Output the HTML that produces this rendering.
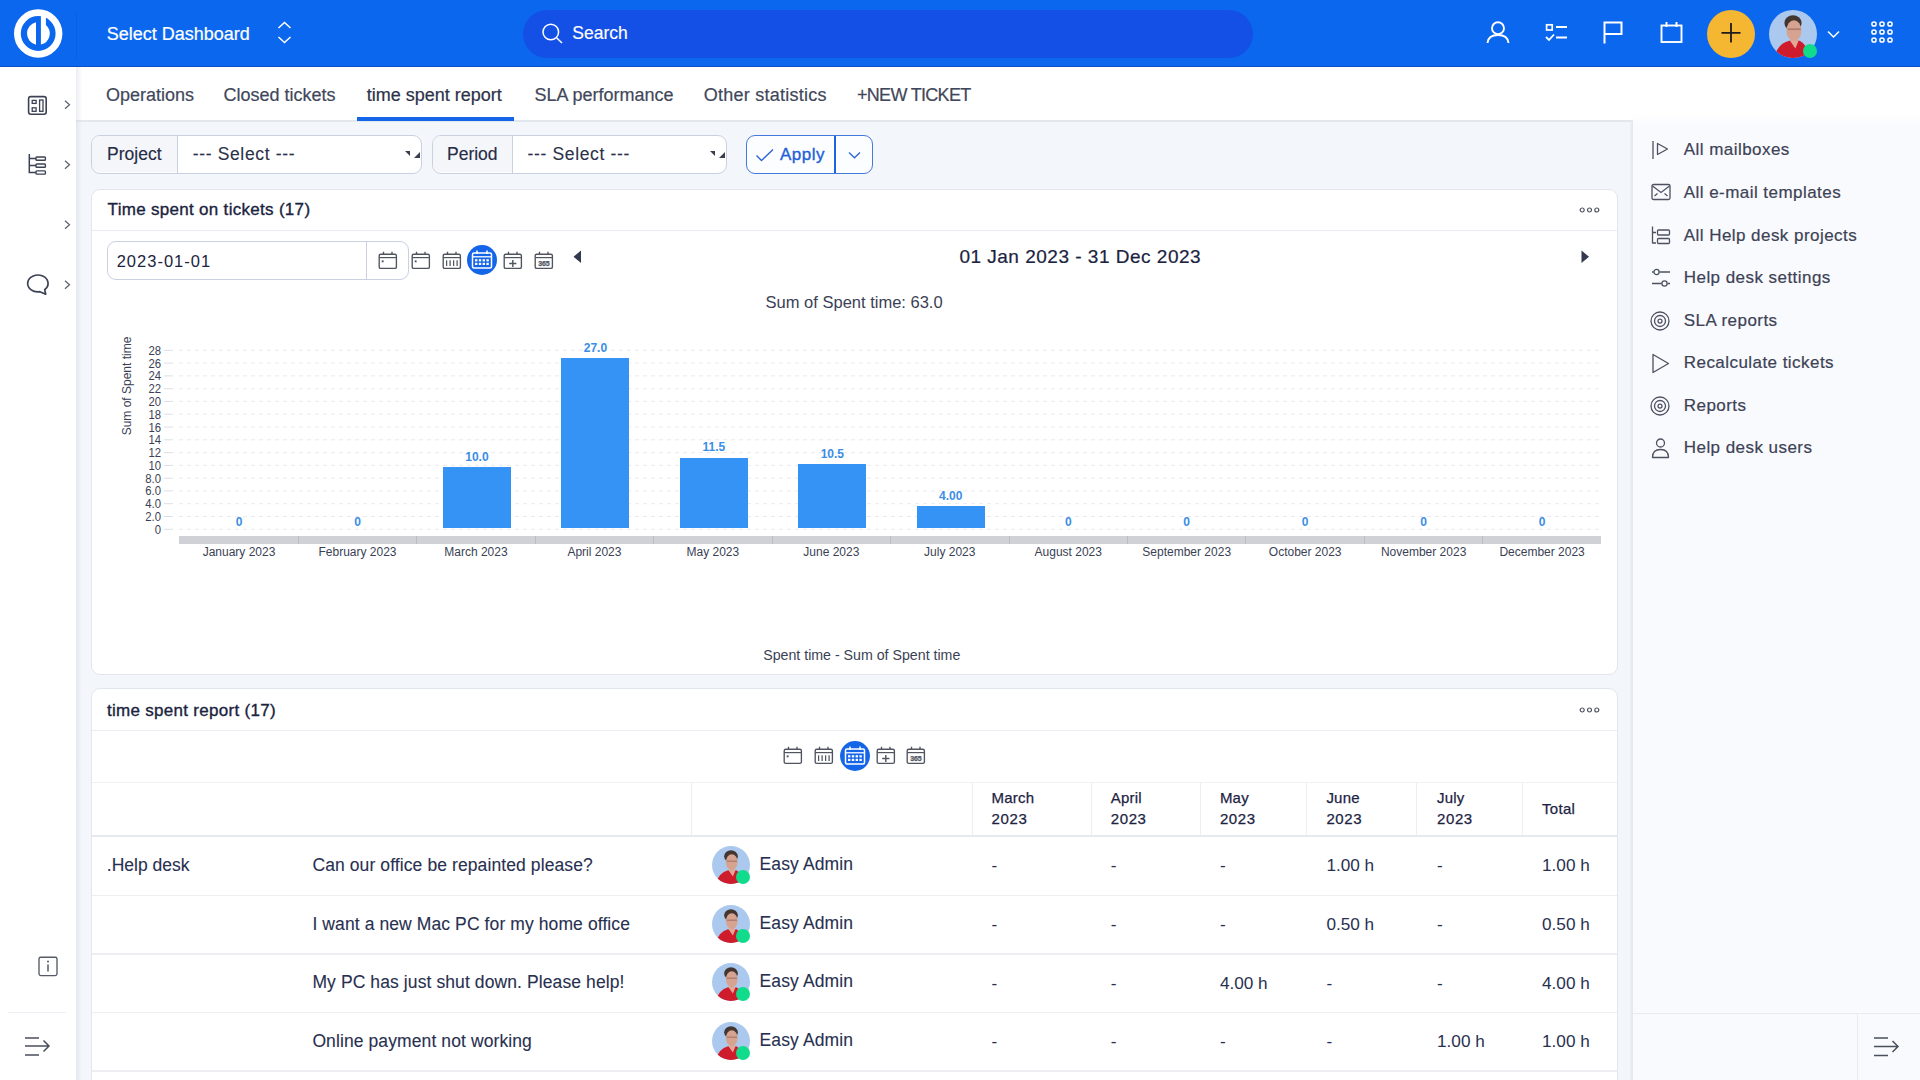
<!DOCTYPE html><html><head><meta charset="utf-8"><title>time spent report</title><style>
html,body{margin:0;padding:0;width:1920px;height:1080px;overflow:hidden;background:#f3f6fb;font-family:"Liberation Sans",sans-serif;}
.t{position:absolute;white-space:nowrap;}
.r{position:absolute;box-sizing:border-box;}
svg.r{overflow:visible}
</style></head><body>

<div class="r" style="left:0px;top:0px;width:1920px;height:67px;background:#0c67ef;"></div>
<div class="r" style="left:0px;top:65.5px;width:1920px;height:1.5px;background:#0a50c4;"></div>
<div class="r" style="left:0px;top:67px;width:76px;height:1013px;background:#ffffff;"></div>
<div class="r" style="left:76px;top:67px;width:1557px;height:54px;background:#ffffff;"></div>
<div class="r" style="left:76px;top:120px;width:1557px;height:2px;background:#e3e7ee;"></div>
<div class="r" style="left:1633px;top:67px;width:287px;height:1013px;background:linear-gradient(180deg,#ffffff 0px,#ffffff 46px,#f9fafd 60px,#f9fafd 100%);"></div>
<div class="r" style="left:1630px;top:121px;width:3px;height:959px;background:linear-gradient(90deg,#eef1f6,#e2e6ed);"></div>
<div class="r" style="left:76px;top:67px;width:6px;height:1013px;background:linear-gradient(90deg,rgba(205,210,220,0.4),rgba(230,234,240,0));"></div>
<svg class="r" style="left:14px;top:9px;" width="49" height="49" viewBox="0 0 49 49"><circle cx="24.2" cy="24.5" r="20.8" fill="none" stroke="#fff" stroke-width="6.8"/><path d="M22 13.36 A11.4 11.4 0 0 0 22 35.64 Z" fill="#fff"/><path d="M26.9 6.5 L31.9 6.5 L31.9 15.92 A11.4 11.4 0 0 1 26.9 35.62 Z" fill="#fff"/></svg>
<div class="r" style="left:76px;top:12px;width:1px;height:46px;background:#0b5fe0;"></div>
<div class="t " style="left:106.75px;top:24.76px;font-size:18px;line-height:18px;color:#ffffff;-webkit-text-stroke:0.2px #ffffff;">Select Dashboard</div>
<svg class="r" style="left:277px;top:21px;" width="16" height="23" viewBox="0 0 16 23"><path d="M1.5 7 L7.5 1.5 L13.5 7 M1.5 16 L7.5 21.5 L13.5 16" fill="none" stroke="#fff" stroke-width="1.5"/></svg>
<div class="r" style="left:523px;top:9.5px;width:730px;height:48px;background:#1450e6;border-radius:24px;"></div>
<svg class="r" style="left:542px;top:23px;" width="22" height="22" viewBox="0 0 22 22"><circle cx="8.8" cy="9" r="7.8" fill="none" stroke="#fff" stroke-width="1.5"/><path d="M14.5 14.8 L20 20" stroke="#fff" stroke-width="1.5"/></svg>
<div class="t " style="left:572.30px;top:25.49px;font-size:17.5px;line-height:17.5px;color:#ffffff;-webkit-text-stroke:0.15px #ffffff;">Search</div>
<svg class="r" style="left:1486px;top:20px;" width="25" height="25" viewBox="0 0 25 25"><circle cx="12" cy="8.2" r="6" fill="none" stroke="#fff" stroke-width="1.9"/><path d="M1.5 23 C2 17.5 6.5 15 12 15 C17.5 15 22 17.5 22.5 23" fill="none" stroke="#fff" stroke-width="1.9"/></svg>
<svg class="r" style="left:1545px;top:23px;" width="23" height="19" viewBox="0 0 23 19"><rect x="1.6" y="1.8" width="5.6" height="5.2" fill="none" stroke="#fff" stroke-width="1.7"/><path d="M11 4 H22 M11 14.5 H22 M1 14 L4 17 L9 11.5" fill="none" stroke="#fff" stroke-width="1.8"/></svg>
<svg class="r" style="left:1603px;top:21px;" width="21" height="23" viewBox="0 0 21 23"><path d="M1.5 22.5 V1.5 H18.5 V13 H1.5" fill="none" stroke="#fff" stroke-width="2"/></svg>
<svg class="r" style="left:1660px;top:21px;" width="24" height="23" viewBox="0 0 24 23"><rect x="1.5" y="4.5" width="20" height="16.5" fill="none" stroke="#fff" stroke-width="1.9"/><path d="M6.5 1 V6 M16.5 1 V6" stroke="#fff" stroke-width="1.9"/></svg>
<svg class="r" style="left:1707px;top:9.5px;" width="48" height="48" viewBox="0 0 48 48"><circle cx="24" cy="24" r="24" fill="#f5b731"/><path d="M24 13 V32.5 M14.5 22.8 H33.5" stroke="#1d1d1d" stroke-width="1.8"/></svg>
<svg class="r" style="left:1769px;top:9.5px;" width="48" height="48" viewBox="0 0 48 48"><defs><clipPath id="c1793_33"><circle cx="24" cy="24" r="24"/></clipPath></defs><g clip-path="url(#c1793_33)"><rect width="48" height="48" fill="#abc9ee"/><ellipse cx="24.0" cy="12.96" rx="8.64" ry="7.68" fill="#43352f"/><ellipse cx="24.96" cy="20.64" rx="7.4399999999999995" ry="10.32" fill="#d6a390"/><path d="M18.72 19.200000000000003 H31.68" stroke="#8a625a" stroke-width="1.6800000000000002" opacity="0.6"/><path d="M4.800000000000001 48 Q8.64 33.599999999999994 20.16 30.72 L30.72 30.72 Q38.400000000000006 34.56 41.28 48 Z" fill="#cf1c2c"/><path d="M20.64 30.240000000000002 L29.759999999999998 30.240000000000002 L26.400000000000002 38.400000000000006 Z" fill="#e2a995"/></g><circle cx="41" cy="41" r="7" fill="#11dc8c"/></svg>
<svg class="r" style="left:1827px;top:30px;" width="14" height="9" viewBox="0 0 14 9"><path d="M1 1.5 L6.5 7 L12 1.5" fill="none" stroke="#fff" stroke-width="1.5"/></svg>
<svg class="r" style="left:1870.5px;top:21.3px;" width="23" height="23" viewBox="0 0 23 23"><circle cx="3" cy="3" r="2.1" fill="none" stroke="#fff" stroke-width="1.5"/><circle cx="11" cy="3" r="2.1" fill="none" stroke="#fff" stroke-width="1.5"/><circle cx="19" cy="3" r="2.1" fill="none" stroke="#fff" stroke-width="1.5"/><circle cx="3" cy="11" r="2.1" fill="none" stroke="#fff" stroke-width="1.5"/><circle cx="11" cy="11" r="2.1" fill="none" stroke="#fff" stroke-width="1.5"/><circle cx="19" cy="11" r="2.1" fill="none" stroke="#fff" stroke-width="1.5"/><circle cx="3" cy="19" r="2.1" fill="none" stroke="#fff" stroke-width="1.5"/><circle cx="11" cy="19" r="2.1" fill="none" stroke="#fff" stroke-width="1.5"/><circle cx="19" cy="19" r="2.1" fill="none" stroke="#fff" stroke-width="1.5"/></svg>
<svg class="r" style="left:27px;top:95px;" width="21" height="21" viewBox="0 0 21 21"><rect x="1.6" y="1.6" width="17.6" height="17.6" rx="2.2" fill="none" stroke="#3c4254" stroke-width="1.6"/><rect x="5.2" y="5.4" width="3.9" height="3" fill="none" stroke="#3c4254" stroke-width="1.3"/><rect x="5.2" y="12.8" width="3.9" height="3.5" fill="none" stroke="#3c4254" stroke-width="1.3"/><rect x="12.6" y="5" width="3.4" height="11.3" fill="none" stroke="#3c4254" stroke-width="1.3"/></svg>
<svg class="r" style="left:27px;top:154px;" width="22" height="23" viewBox="0 0 22 23"><path d="M2.3 0 V18.5 H9 M2.3 4.6 H9 M2.3 11.6 H9" fill="none" stroke="#3c4254" stroke-width="1.5"/><rect x="9" y="3" width="9.4" height="3.2" rx="0.8" fill="none" stroke="#3c4254" stroke-width="1.4"/><rect x="9" y="10" width="9.4" height="3.2" rx="0.8" fill="none" stroke="#3c4254" stroke-width="1.4"/><rect x="9" y="16.9" width="9.4" height="3.2" rx="0.8" fill="none" stroke="#3c4254" stroke-width="1.4"/></svg>
<svg class="r" style="left:64px;top:100px;top:100px" width="8" height="10" viewBox="0 0 8 10"><path d="M1 0.8 L5.5 4.8 L1 8.8" fill="none" stroke="#5d6270" stroke-width="1.25"/></svg>
<svg class="r" style="left:64px;top:100px;top:160px" width="8" height="10" viewBox="0 0 8 10"><path d="M1 0.8 L5.5 4.8 L1 8.8" fill="none" stroke="#5d6270" stroke-width="1.25"/></svg>
<svg class="r" style="left:64px;top:100px;top:220px" width="8" height="10" viewBox="0 0 8 10"><path d="M1 0.8 L5.5 4.8 L1 8.8" fill="none" stroke="#5d6270" stroke-width="1.25"/></svg>
<svg class="r" style="left:64px;top:100px;top:280px" width="8" height="10" viewBox="0 0 8 10"><path d="M1 0.8 L5.5 4.8 L1 8.8" fill="none" stroke="#5d6270" stroke-width="1.25"/></svg>
<svg class="r" style="left:26px;top:274px;" width="23" height="22" viewBox="0 0 23 22"><path d="M13.9 17.7 L19.7 20.2 L18.7 15.7 A10.2 8.4 0 1 0 13.9 17.7 Z" fill="none" stroke="#3c4254" stroke-width="1.7" stroke-linejoin="round"/></svg>
<svg class="r" style="left:38px;top:956px;" width="20" height="21" viewBox="0 0 20 21"><rect x="1" y="1.2" width="18" height="18.4" rx="1.8" fill="none" stroke="#555a67" stroke-width="1.35"/><path d="M10 8.5 V15.5" stroke="#555a67" stroke-width="1.5"/><circle cx="10" cy="5.4" r="1" fill="#555a67"/></svg>
<div class="r" style="left:8px;top:1012px;width:58px;height:1px;background:#eceef3;"></div>
<svg class="r" style="left:24px;top:1036px;" width="28" height="21" viewBox="0 0 28 21"><path d="M1 2 H15 M1 10 H25 M1 19 H15 M19.5 4.5 L25 10 L19.5 15.5" fill="none" stroke="#4a4f5c" stroke-width="1.5"/></svg>
<div class="t " style="left:106.00px;top:85.76px;font-size:18px;line-height:18px;color:#41475a;-webkit-text-stroke:0.2px #41475a;">Operations</div>
<div class="t " style="left:223.40px;top:85.76px;font-size:18px;line-height:18px;color:#41475a;-webkit-text-stroke:0.2px #41475a;">Closed tickets</div>
<div class="t " style="left:366.80px;top:85.76px;font-size:18px;line-height:18px;color:#2b3249;-webkit-text-stroke:0.2px #2b3249;">time spent report</div>
<div class="r" style="left:357px;top:117px;width:157px;height:4px;background:#1565e9;"></div>
<div class="t " style="left:534.50px;top:85.76px;font-size:18px;line-height:18px;color:#41475a;-webkit-text-stroke:0.2px #41475a;">SLA performance</div>
<div class="t " style="left:703.75px;top:85.76px;font-size:18px;line-height:18px;color:#41475a;letter-spacing:0.25px;-webkit-text-stroke:0.2px #41475a;">Other statistics</div>
<div class="t " style="left:857.00px;top:85.76px;font-size:18px;line-height:18px;color:#41475a;letter-spacing:-0.7px;-webkit-text-stroke:0.2px #41475a;">+NEW TICKET</div>
<div class="r" style="left:91px;top:134.8px;width:330.5px;height:38.8px;background:#fff;border:1px solid #c9d1e0;border-radius:9px;"></div>
<div class="r" style="left:92.3px;top:136px;width:85px;height:36.4px;background:#f4f6fa;border-radius:8px 0 0 8px;"></div>
<div class="r" style="left:177px;top:136px;width:1px;height:37px;background:#c9d1e0;"></div>
<div class="t " style="left:107.10px;top:146.49px;font-size:17.5px;line-height:17.5px;color:#252c45;-webkit-text-stroke:0.15px #252c45;">Project</div>
<div class="t " style="left:192.70px;top:146.49px;font-size:17.5px;line-height:17.5px;color:#2b3148;letter-spacing:0.65px;-webkit-text-stroke:0.1px #2b3148;">--- Select ---</div>
<svg class="r" style="left:405px;top:151px;" width="16" height="8" viewBox="0 0 16 8"><path d="M0 0 L5 0 L5 5 Z" fill="#3b3f4d"/><path d="M15 1 L15 7 L9 7 Z" fill="#3b3f4d"/></svg>
<div class="r" style="left:431.5px;top:134.8px;width:295px;height:38.8px;background:#fff;border:1px solid #c9d1e0;border-radius:9px;"></div>
<div class="r" style="left:432.8px;top:136px;width:79px;height:36.4px;background:#f4f6fa;border-radius:8px 0 0 8px;"></div>
<div class="r" style="left:511.5px;top:136px;width:1px;height:37px;background:#c9d1e0;"></div>
<div class="t " style="left:447.00px;top:146.39px;font-size:17.5px;line-height:17.5px;color:#252c45;-webkit-text-stroke:0.15px #252c45;">Period</div>
<div class="t " style="left:527.50px;top:145.99px;font-size:17.5px;line-height:17.5px;color:#2b3148;letter-spacing:0.65px;-webkit-text-stroke:0.1px #2b3148;">--- Select ---</div>
<svg class="r" style="left:710px;top:151px;" width="16" height="8" viewBox="0 0 16 8"><path d="M0 0 L5 0 L5 5 Z" fill="#3b3f4d"/><path d="M15 1 L15 7 L9 7 Z" fill="#3b3f4d"/></svg>
<div class="r" style="left:746px;top:135.2px;width:127px;height:38.5px;background:#fbfdff;border:1.3px solid #4279dc;border-radius:9px;"></div>
<div class="r" style="left:834px;top:136px;width:2px;height:37px;background:#1f63de;"></div>
<svg class="r" style="left:755px;top:148px;" width="20" height="14" viewBox="0 0 20 14"><path d="M1.5 7.5 L6.5 12.5 L18 1.5" fill="none" stroke="#2b66d6" stroke-width="1.4"/></svg>
<div class="t " style="left:780.00px;top:146.11px;font-size:17px;line-height:17px;color:#1f5fd6;letter-spacing:0.5px;-webkit-text-stroke:0.35px #1f5fd6;">Apply</div>
<svg class="r" style="left:848px;top:151px;" width="13" height="8" viewBox="0 0 13 8"><path d="M1 1.5 L6.5 6.8 L12 1.5" fill="none" stroke="#2b66d6" stroke-width="1.3"/></svg>
<div class="r" style="left:91px;top:188.5px;width:1526.5px;height:486px;background:#fff;border:1px solid #e2e6ed;border-radius:9px;"></div>
<div class="r" style="left:92px;top:230px;width:1525px;height:1px;background:#e9ecf0;"></div>
<div class="t " style="left:107.60px;top:201.41px;font-size:17px;line-height:17px;color:#1a2340;letter-spacing:0.3px;-webkit-text-stroke:0.35px #1a2340;">Time spent on tickets (17)</div>
<svg class="r" style="left:1578.5px;top:205.5px;" width="22" height="8" viewBox="0 0 22 8"><circle cx="3.2" cy="4" r="2.0" fill="none" stroke="#50545f" stroke-width="1.2"/><circle cx="10.5" cy="4" r="2.0" fill="none" stroke="#50545f" stroke-width="1.2"/><circle cx="17.8" cy="4" r="2.0" fill="none" stroke="#50545f" stroke-width="1.2"/></svg>
<div class="r" style="left:106.5px;top:241px;width:302px;height:38.5px;background:#fff;border:1px solid #c9d1e0;border-radius:9px;"></div>
<div class="r" style="left:366px;top:242px;width:1px;height:37px;background:#c9d1e0;"></div>
<div class="t " style="left:116.70px;top:252.73px;font-size:16.5px;line-height:16.5px;color:#1c2340;letter-spacing:1.0px;">2023-01-01</div>
<svg class="r" style="left:377.5px;top:251px;" width="20" height="19" viewBox="0 0 20 19"><rect x="1.2" y="3.2" width="17.2" height="14.2" rx="1.5" fill="none" stroke="#50545f" stroke-width="1.35"/><path d="M5.5 0.8 V4 M14 0.8 V4" stroke="#50545f" stroke-width="1.35"/><path d="M1.2 6.6 H18.4" stroke="#50545f" stroke-width="1.2"/><rect x="3.7" y="9.4" width="1.9" height="1.9" fill="#50545f"/></svg>
<svg class="r" style="left:410.5px;top:251px;" width="20" height="19" viewBox="0 0 20 19"><rect x="1.2" y="3.2" width="17.2" height="14.2" rx="1.5" fill="none" stroke="#50545f" stroke-width="1.35"/><path d="M5.5 0.8 V4 M14 0.8 V4" stroke="#50545f" stroke-width="1.35"/><path d="M1.2 6.6 H18.4" stroke="#50545f" stroke-width="1.2"/><rect x="3.7" y="9.4" width="1.9" height="1.9" fill="#50545f"/></svg>
<svg class="r" style="left:441.5px;top:251px;" width="20" height="19" viewBox="0 0 20 19"><rect x="1.2" y="3.2" width="17.2" height="14.2" rx="1.5" fill="none" stroke="#50545f" stroke-width="1.35"/><path d="M5.5 0.8 V4 M14 0.8 V4" stroke="#50545f" stroke-width="1.35"/><path d="M1.2 6.6 H18.4" stroke="#50545f" stroke-width="1.2"/><path d="M4.6 9.3 V15" stroke="#50545f" stroke-width="1.25"/><path d="M8.1 9.3 V15" stroke="#50545f" stroke-width="1.25"/><path d="M11.6 9.3 V15" stroke="#50545f" stroke-width="1.25"/><path d="M15.1 9.3 V15" stroke="#50545f" stroke-width="1.25"/></svg>
<svg class="r" style="left:467px;top:245px;" width="30" height="30" viewBox="0 0 30 30"><circle cx="15" cy="15" r="15" fill="#1565e9"/><rect x="5.5" y="8" width="19" height="15" rx="1.5" fill="none" stroke="#fff" stroke-width="1.5"/><path d="M10 5.5 V9 M20 5.5 V9" stroke="#fff" stroke-width="1.5"/><path d="M5.5 11.8 H24.5" stroke="#fff" stroke-width="1.3"/><rect x="8.0" y="14.2" width="2.4" height="2.2" fill="#fff"/><rect x="8.0" y="17.8" width="2.4" height="2.2" fill="#fff"/><rect x="11.8" y="14.2" width="2.4" height="2.2" fill="#fff"/><rect x="11.8" y="17.8" width="2.4" height="2.2" fill="#fff"/><rect x="15.6" y="14.2" width="2.4" height="2.2" fill="#fff"/><rect x="15.6" y="17.8" width="2.4" height="2.2" fill="#fff"/><rect x="19.4" y="14.2" width="2.4" height="2.2" fill="#fff"/><rect x="19.4" y="17.8" width="2.4" height="2.2" fill="#fff"/></svg>
<svg class="r" style="left:503px;top:251px;" width="20" height="19" viewBox="0 0 20 19"><rect x="1.2" y="3.2" width="17.2" height="14.2" rx="1.5" fill="none" stroke="#50545f" stroke-width="1.35"/><path d="M5.5 0.8 V4 M14 0.8 V4" stroke="#50545f" stroke-width="1.35"/><path d="M1.2 6.6 H18.4" stroke="#50545f" stroke-width="1.2"/><path d="M9.8 9 V16 M6.2 12.5 H13.4" stroke="#50545f" stroke-width="1.4"/></svg>
<svg class="r" style="left:533.5px;top:251px;" width="20" height="19" viewBox="0 0 20 19"><rect x="1.2" y="3.2" width="17.2" height="14.2" rx="1.5" fill="none" stroke="#50545f" stroke-width="1.35"/><path d="M5.5 0.8 V4 M14 0.8 V4" stroke="#50545f" stroke-width="1.35"/><path d="M1.2 6.6 H18.4" stroke="#50545f" stroke-width="1.2"/><text x="9.8" y="15.2" font-size="7" font-weight="700" text-anchor="middle" fill="#50545f" stroke="#50545f" stroke-width="0.25" font-family="Liberation Sans" letter-spacing="-0.2">365</text></svg>
<svg class="r" style="left:573px;top:250px;" width="9" height="14" viewBox="0 0 9 14"><path d="M8 0.5 V13 L0.5 6.75 Z" fill="#333a4d"/></svg>
<svg class="r" style="left:1581px;top:250px;" width="9" height="14" viewBox="0 0 9 14"><path d="M0.5 0.5 V13 L8 6.75 Z" fill="#333a4d"/></svg>
<div class="t " style="left:959.40px;top:246.62px;font-size:19px;line-height:19px;color:#1a2340;letter-spacing:0.5px;-webkit-text-stroke:0.2px #1a2340;">01 Jan 2023 - 31 Dec 2023</div>
<div class="t " style="left:765.60px;top:294.03px;font-size:16.5px;line-height:16.5px;color:#3a3f55;">Sum of Spent time: 63.0</div>
<div class="t" style="left:160.8px;top:343.80px;font-size:13px;line-height:13px;color:#3a3f55;transform-origin:100% 50%;transform:translateX(-100%) scaleX(0.87);">28</div>
<div class="t" style="left:160.8px;top:356.59px;font-size:13px;line-height:13px;color:#3a3f55;transform-origin:100% 50%;transform:translateX(-100%) scaleX(0.87);">26</div>
<div class="t" style="left:160.8px;top:369.37px;font-size:13px;line-height:13px;color:#3a3f55;transform-origin:100% 50%;transform:translateX(-100%) scaleX(0.87);">24</div>
<div class="t" style="left:160.8px;top:382.16px;font-size:13px;line-height:13px;color:#3a3f55;transform-origin:100% 50%;transform:translateX(-100%) scaleX(0.87);">22</div>
<div class="t" style="left:160.8px;top:394.94px;font-size:13px;line-height:13px;color:#3a3f55;transform-origin:100% 50%;transform:translateX(-100%) scaleX(0.87);">20</div>
<div class="t" style="left:160.8px;top:407.73px;font-size:13px;line-height:13px;color:#3a3f55;transform-origin:100% 50%;transform:translateX(-100%) scaleX(0.87);">18</div>
<div class="t" style="left:160.8px;top:420.51px;font-size:13px;line-height:13px;color:#3a3f55;transform-origin:100% 50%;transform:translateX(-100%) scaleX(0.87);">16</div>
<div class="t" style="left:160.8px;top:433.30px;font-size:13px;line-height:13px;color:#3a3f55;transform-origin:100% 50%;transform:translateX(-100%) scaleX(0.87);">14</div>
<div class="t" style="left:160.8px;top:446.09px;font-size:13px;line-height:13px;color:#3a3f55;transform-origin:100% 50%;transform:translateX(-100%) scaleX(0.87);">12</div>
<div class="t" style="left:160.8px;top:458.87px;font-size:13px;line-height:13px;color:#3a3f55;transform-origin:100% 50%;transform:translateX(-100%) scaleX(0.87);">10</div>
<div class="t" style="left:160.8px;top:471.66px;font-size:13px;line-height:13px;color:#3a3f55;transform-origin:100% 50%;transform:translateX(-100%) scaleX(0.87);">8.0</div>
<div class="t" style="left:160.8px;top:484.44px;font-size:13px;line-height:13px;color:#3a3f55;transform-origin:100% 50%;transform:translateX(-100%) scaleX(0.87);">6.0</div>
<div class="t" style="left:160.8px;top:497.23px;font-size:13px;line-height:13px;color:#3a3f55;transform-origin:100% 50%;transform:translateX(-100%) scaleX(0.87);">4.0</div>
<div class="t" style="left:160.8px;top:510.01px;font-size:13px;line-height:13px;color:#3a3f55;transform-origin:100% 50%;transform:translateX(-100%) scaleX(0.87);">2.0</div>
<div class="t" style="left:160.8px;top:522.80px;font-size:13px;line-height:13px;color:#3a3f55;transform-origin:100% 50%;transform:translateX(-100%) scaleX(0.87);">0</div>
<svg class="r" style="left:0;top:0" width="1920" height="1080"><path d="M164 350.3 H173" stroke="#dcdee3" stroke-width="1"/><path d="M179 350.3 H1601" stroke="#e9eaee" stroke-width="1" stroke-dasharray="4 4"/><path d="M164 363.1 H173" stroke="#dcdee3" stroke-width="1"/><path d="M179 363.1 H1601" stroke="#e9eaee" stroke-width="1" stroke-dasharray="4 4"/><path d="M164 375.9 H173" stroke="#dcdee3" stroke-width="1"/><path d="M179 375.9 H1601" stroke="#e9eaee" stroke-width="1" stroke-dasharray="4 4"/><path d="M164 388.7 H173" stroke="#dcdee3" stroke-width="1"/><path d="M179 388.7 H1601" stroke="#e9eaee" stroke-width="1" stroke-dasharray="4 4"/><path d="M164 401.4 H173" stroke="#dcdee3" stroke-width="1"/><path d="M179 401.4 H1601" stroke="#e9eaee" stroke-width="1" stroke-dasharray="4 4"/><path d="M164 414.2 H173" stroke="#dcdee3" stroke-width="1"/><path d="M179 414.2 H1601" stroke="#e9eaee" stroke-width="1" stroke-dasharray="4 4"/><path d="M164 427.0 H173" stroke="#dcdee3" stroke-width="1"/><path d="M179 427.0 H1601" stroke="#e9eaee" stroke-width="1" stroke-dasharray="4 4"/><path d="M164 439.8 H173" stroke="#dcdee3" stroke-width="1"/><path d="M179 439.8 H1601" stroke="#e9eaee" stroke-width="1" stroke-dasharray="4 4"/><path d="M164 452.6 H173" stroke="#dcdee3" stroke-width="1"/><path d="M179 452.6 H1601" stroke="#e9eaee" stroke-width="1" stroke-dasharray="4 4"/><path d="M164 465.4 H173" stroke="#dcdee3" stroke-width="1"/><path d="M179 465.4 H1601" stroke="#e9eaee" stroke-width="1" stroke-dasharray="4 4"/><path d="M164 478.2 H173" stroke="#dcdee3" stroke-width="1"/><path d="M179 478.2 H1601" stroke="#e9eaee" stroke-width="1" stroke-dasharray="4 4"/><path d="M164 490.9 H173" stroke="#dcdee3" stroke-width="1"/><path d="M179 490.9 H1601" stroke="#e9eaee" stroke-width="1" stroke-dasharray="4 4"/><path d="M164 503.7 H173" stroke="#dcdee3" stroke-width="1"/><path d="M179 503.7 H1601" stroke="#e9eaee" stroke-width="1" stroke-dasharray="4 4"/><path d="M164 516.5 H173" stroke="#dcdee3" stroke-width="1"/><path d="M179 516.5 H1601" stroke="#e9eaee" stroke-width="1" stroke-dasharray="4 4"/><path d="M164 529.3 H173" stroke="#dcdee3" stroke-width="1"/><path d="M179 529.3 H1601" stroke="#e9eaee" stroke-width="1" stroke-dasharray="4 4"/></svg>
<div class="t" style="left:126.7px;top:386px;font-size:12px;line-height:12px;color:#3a3f55;transform:translate(-50%,-50%) rotate(-90deg);">Sum of Spent time</div>
<div class="r" style="left:178.8px;top:536.2px;width:1422px;height:7.6px;background:#cfd1d6;"></div>
<div class="r" style="left:297.8px;top:536.2px;width:1px;height:7.6px;background:#b9bcc3;"></div>
<div class="r" style="left:416.2px;top:536.2px;width:1px;height:7.6px;background:#b9bcc3;"></div>
<div class="r" style="left:534.7px;top:536.2px;width:1px;height:7.6px;background:#b9bcc3;"></div>
<div class="r" style="left:653.1px;top:536.2px;width:1px;height:7.6px;background:#b9bcc3;"></div>
<div class="r" style="left:771.6px;top:536.2px;width:1px;height:7.6px;background:#b9bcc3;"></div>
<div class="r" style="left:890.1px;top:536.2px;width:1px;height:7.6px;background:#b9bcc3;"></div>
<div class="r" style="left:1008.5px;top:536.2px;width:1px;height:7.6px;background:#b9bcc3;"></div>
<div class="r" style="left:1127.0px;top:536.2px;width:1px;height:7.6px;background:#b9bcc3;"></div>
<div class="r" style="left:1245.4px;top:536.2px;width:1px;height:7.6px;background:#b9bcc3;"></div>
<div class="r" style="left:1363.9px;top:536.2px;width:1px;height:7.6px;background:#b9bcc3;"></div>
<div class="r" style="left:1482.4px;top:536.2px;width:1px;height:7.6px;background:#b9bcc3;"></div>
<div class="t " style="left:239.03px;top:545.64px;font-size:12px;line-height:12px;color:#3a3f55;transform:translateX(-50%);">January 2023</div>
<div class="t " style="left:239.03px;top:515.54px;font-size:12px;line-height:12px;color:#3b8ee6;font-weight:700;transform:translateX(-50%);">0</div>
<div class="t " style="left:357.49px;top:545.64px;font-size:12px;line-height:12px;color:#3a3f55;transform:translateX(-50%);">February 2023</div>
<div class="t " style="left:357.49px;top:515.54px;font-size:12px;line-height:12px;color:#3b8ee6;font-weight:700;transform:translateX(-50%);">0</div>
<div class="t " style="left:475.95px;top:545.64px;font-size:12px;line-height:12px;color:#3a3f55;transform:translateX(-50%);">March 2023</div>
<div class="r" style="left:442.9px;top:467.2px;width:68px;height:60.6px;background:#3593f5;"></div>
<div class="t " style="left:476.95px;top:451.04px;font-size:12px;line-height:12px;color:#3b8ee6;font-weight:700;transform:translateX(-50%);">10.0</div>
<div class="t " style="left:594.41px;top:545.64px;font-size:12px;line-height:12px;color:#3a3f55;transform:translateX(-50%);">April 2023</div>
<div class="r" style="left:561.4px;top:357.9px;width:68px;height:169.9px;background:#3593f5;"></div>
<div class="t " style="left:595.41px;top:341.73px;font-size:12px;line-height:12px;color:#3b8ee6;font-weight:700;transform:translateX(-50%);">27.0</div>
<div class="t " style="left:712.87px;top:545.64px;font-size:12px;line-height:12px;color:#3a3f55;transform:translateX(-50%);">May 2023</div>
<div class="r" style="left:679.9px;top:457.6px;width:68px;height:70.2px;background:#3593f5;"></div>
<div class="t " style="left:713.87px;top:441.40px;font-size:12px;line-height:12px;color:#3b8ee6;font-weight:700;transform:translateX(-50%);">11.5</div>
<div class="t " style="left:831.33px;top:545.64px;font-size:12px;line-height:12px;color:#3a3f55;transform:translateX(-50%);">June 2023</div>
<div class="r" style="left:798.3px;top:464.0px;width:68px;height:63.8px;background:#3593f5;"></div>
<div class="t " style="left:832.33px;top:447.83px;font-size:12px;line-height:12px;color:#3b8ee6;font-weight:700;transform:translateX(-50%);">10.5</div>
<div class="t " style="left:949.79px;top:545.64px;font-size:12px;line-height:12px;color:#3a3f55;transform:translateX(-50%);">July 2023</div>
<div class="r" style="left:916.8px;top:505.8px;width:68px;height:22.0px;background:#3593f5;"></div>
<div class="t " style="left:950.79px;top:489.62px;font-size:12px;line-height:12px;color:#3b8ee6;font-weight:700;transform:translateX(-50%);">4.00</div>
<div class="t " style="left:1068.25px;top:545.64px;font-size:12px;line-height:12px;color:#3a3f55;transform:translateX(-50%);">August 2023</div>
<div class="t " style="left:1068.25px;top:515.54px;font-size:12px;line-height:12px;color:#3b8ee6;font-weight:700;transform:translateX(-50%);">0</div>
<div class="t " style="left:1186.71px;top:545.64px;font-size:12px;line-height:12px;color:#3a3f55;transform:translateX(-50%);">September 2023</div>
<div class="t " style="left:1186.71px;top:515.54px;font-size:12px;line-height:12px;color:#3b8ee6;font-weight:700;transform:translateX(-50%);">0</div>
<div class="t " style="left:1305.17px;top:545.64px;font-size:12px;line-height:12px;color:#3a3f55;transform:translateX(-50%);">October 2023</div>
<div class="t " style="left:1305.17px;top:515.54px;font-size:12px;line-height:12px;color:#3b8ee6;font-weight:700;transform:translateX(-50%);">0</div>
<div class="t " style="left:1423.63px;top:545.64px;font-size:12px;line-height:12px;color:#3a3f55;transform:translateX(-50%);">November 2023</div>
<div class="t " style="left:1423.63px;top:515.54px;font-size:12px;line-height:12px;color:#3b8ee6;font-weight:700;transform:translateX(-50%);">0</div>
<div class="t " style="left:1542.09px;top:545.64px;font-size:12px;line-height:12px;color:#3a3f55;transform:translateX(-50%);">December 2023</div>
<div class="t " style="left:1542.09px;top:515.54px;font-size:12px;line-height:12px;color:#3b8ee6;font-weight:700;transform:translateX(-50%);">0</div>
<div class="t " style="left:763.20px;top:647.78px;font-size:14.2px;line-height:14.2px;color:#3a3f55;">Spent time - Sum of Spent time</div>
<div class="r" style="left:91px;top:688px;width:1526.5px;height:420px;background:#fff;border:1px solid #e2e6ed;border-radius:9px;"></div>
<div class="r" style="left:92px;top:730px;width:1525px;height:1px;background:#e9ecf0;"></div>
<div class="t " style="left:106.90px;top:701.61px;font-size:17px;line-height:17px;color:#1a2340;letter-spacing:0.3px;-webkit-text-stroke:0.35px #1a2340;">time spent report (17)</div>
<svg class="r" style="left:1578.5px;top:706.2px;" width="22" height="8" viewBox="0 0 22 8"><circle cx="3.2" cy="4" r="2.0" fill="none" stroke="#50545f" stroke-width="1.2"/><circle cx="10.5" cy="4" r="2.0" fill="none" stroke="#50545f" stroke-width="1.2"/><circle cx="17.8" cy="4" r="2.0" fill="none" stroke="#50545f" stroke-width="1.2"/></svg>
<div class="r" style="left:92px;top:781.5px;width:1525px;height:1.5px;background:#eef0f4;"></div>
<svg class="r" style="left:783px;top:746px;" width="20" height="19" viewBox="0 0 20 19"><rect x="1.2" y="3.2" width="17.2" height="14.2" rx="1.5" fill="none" stroke="#50545f" stroke-width="1.35"/><path d="M5.5 0.8 V4 M14 0.8 V4" stroke="#50545f" stroke-width="1.35"/><path d="M1.2 6.6 H18.4" stroke="#50545f" stroke-width="1.2"/><rect x="3.7" y="9.4" width="1.9" height="1.9" fill="#50545f"/></svg>
<svg class="r" style="left:814px;top:746px;" width="20" height="19" viewBox="0 0 20 19"><rect x="1.2" y="3.2" width="17.2" height="14.2" rx="1.5" fill="none" stroke="#50545f" stroke-width="1.35"/><path d="M5.5 0.8 V4 M14 0.8 V4" stroke="#50545f" stroke-width="1.35"/><path d="M1.2 6.6 H18.4" stroke="#50545f" stroke-width="1.2"/><path d="M4.6 9.3 V15" stroke="#50545f" stroke-width="1.25"/><path d="M8.1 9.3 V15" stroke="#50545f" stroke-width="1.25"/><path d="M11.6 9.3 V15" stroke="#50545f" stroke-width="1.25"/><path d="M15.1 9.3 V15" stroke="#50545f" stroke-width="1.25"/></svg>
<svg class="r" style="left:839.5px;top:741.2px;" width="30" height="30" viewBox="0 0 30 30"><circle cx="15" cy="15" r="15" fill="#1565e9"/><rect x="5.5" y="8" width="19" height="15" rx="1.5" fill="none" stroke="#fff" stroke-width="1.5"/><path d="M10 5.5 V9 M20 5.5 V9" stroke="#fff" stroke-width="1.5"/><path d="M5.5 11.8 H24.5" stroke="#fff" stroke-width="1.3"/><rect x="8.0" y="14.2" width="2.4" height="2.2" fill="#fff"/><rect x="8.0" y="17.8" width="2.4" height="2.2" fill="#fff"/><rect x="11.8" y="14.2" width="2.4" height="2.2" fill="#fff"/><rect x="11.8" y="17.8" width="2.4" height="2.2" fill="#fff"/><rect x="15.6" y="14.2" width="2.4" height="2.2" fill="#fff"/><rect x="15.6" y="17.8" width="2.4" height="2.2" fill="#fff"/><rect x="19.4" y="14.2" width="2.4" height="2.2" fill="#fff"/><rect x="19.4" y="17.8" width="2.4" height="2.2" fill="#fff"/></svg>
<svg class="r" style="left:875.5px;top:746px;" width="20" height="19" viewBox="0 0 20 19"><rect x="1.2" y="3.2" width="17.2" height="14.2" rx="1.5" fill="none" stroke="#50545f" stroke-width="1.35"/><path d="M5.5 0.8 V4 M14 0.8 V4" stroke="#50545f" stroke-width="1.35"/><path d="M1.2 6.6 H18.4" stroke="#50545f" stroke-width="1.2"/><path d="M9.8 9 V16 M6.2 12.5 H13.4" stroke="#50545f" stroke-width="1.4"/></svg>
<svg class="r" style="left:906px;top:746px;" width="20" height="19" viewBox="0 0 20 19"><rect x="1.2" y="3.2" width="17.2" height="14.2" rx="1.5" fill="none" stroke="#50545f" stroke-width="1.35"/><path d="M5.5 0.8 V4 M14 0.8 V4" stroke="#50545f" stroke-width="1.35"/><path d="M1.2 6.6 H18.4" stroke="#50545f" stroke-width="1.2"/><text x="9.8" y="15.2" font-size="7" font-weight="700" text-anchor="middle" fill="#50545f" stroke="#50545f" stroke-width="0.25" font-family="Liberation Sans" letter-spacing="-0.2">365</text></svg>
<div class="r" style="left:691px;top:783px;width:1px;height:52px;background:#eceef3;"></div>
<div class="r" style="left:971.5px;top:783px;width:1px;height:52px;background:#eceef3;"></div>
<div class="r" style="left:1091px;top:783px;width:1px;height:52px;background:#eceef3;"></div>
<div class="r" style="left:1200px;top:783px;width:1px;height:52px;background:#eceef3;"></div>
<div class="r" style="left:1306px;top:783px;width:1px;height:52px;background:#eceef3;"></div>
<div class="r" style="left:1416.3px;top:783px;width:1px;height:52px;background:#eceef3;"></div>
<div class="r" style="left:1521.7px;top:783px;width:1px;height:52px;background:#eceef3;"></div>
<div class="r" style="left:92px;top:834.5px;width:1525px;height:2px;background:#e6e9ef;"></div>
<div class="t " style="left:991.60px;top:789.60px;font-size:15px;line-height:15px;color:#1c2442;letter-spacing:0.2px;-webkit-text-stroke:0.25px #1c2442;">March</div>
<div class="t " style="left:991.60px;top:811.10px;font-size:15px;line-height:15px;color:#1c2442;letter-spacing:0.6px;-webkit-text-stroke:0.25px #1c2442;">2023</div>
<div class="t " style="left:1110.80px;top:789.60px;font-size:15px;line-height:15px;color:#1c2442;letter-spacing:0.2px;-webkit-text-stroke:0.25px #1c2442;">April</div>
<div class="t " style="left:1110.80px;top:811.10px;font-size:15px;line-height:15px;color:#1c2442;letter-spacing:0.6px;-webkit-text-stroke:0.25px #1c2442;">2023</div>
<div class="t " style="left:1219.90px;top:789.60px;font-size:15px;line-height:15px;color:#1c2442;letter-spacing:0.2px;-webkit-text-stroke:0.25px #1c2442;">May</div>
<div class="t " style="left:1219.90px;top:811.10px;font-size:15px;line-height:15px;color:#1c2442;letter-spacing:0.6px;-webkit-text-stroke:0.25px #1c2442;">2023</div>
<div class="t " style="left:1326.40px;top:789.60px;font-size:15px;line-height:15px;color:#1c2442;letter-spacing:0.2px;-webkit-text-stroke:0.25px #1c2442;">June</div>
<div class="t " style="left:1326.40px;top:811.10px;font-size:15px;line-height:15px;color:#1c2442;letter-spacing:0.6px;-webkit-text-stroke:0.25px #1c2442;">2023</div>
<div class="t " style="left:1437.00px;top:789.60px;font-size:15px;line-height:15px;color:#1c2442;letter-spacing:0.2px;-webkit-text-stroke:0.25px #1c2442;">July</div>
<div class="t " style="left:1437.00px;top:811.10px;font-size:15px;line-height:15px;color:#1c2442;letter-spacing:0.6px;-webkit-text-stroke:0.25px #1c2442;">2023</div>
<div class="t " style="left:1542.00px;top:801.20px;font-size:15px;line-height:15px;color:#1c2442;letter-spacing:0.3px;-webkit-text-stroke:0.25px #1c2442;">Total</div>
<div class="t " style="left:106.80px;top:856.99px;font-size:17.5px;line-height:17.5px;color:#283050;-webkit-text-stroke:0.1px #283050;">.Help desk</div>
<div class="t " style="left:312.40px;top:856.99px;font-size:17.5px;line-height:17.5px;color:#283050;letter-spacing:0.1px;-webkit-text-stroke:0.1px #283050;">Can our office be repainted please?</div>
<svg class="r" style="left:711.5px;top:846px;" width="38" height="38" viewBox="0 0 38 38"><defs><clipPath id="c730_865"><circle cx="19" cy="19" r="19"/></clipPath></defs><g clip-path="url(#c730_865)"><rect width="38" height="38" fill="#abc9ee"/><ellipse cx="19.0" cy="10.260000000000002" rx="6.84" ry="6.08" fill="#43352f"/><ellipse cx="19.76" cy="16.34" rx="5.89" ry="8.17" fill="#d6a390"/><path d="M14.82 15.200000000000001 H25.080000000000002" stroke="#8a625a" stroke-width="1.33" opacity="0.6"/><path d="M3.8000000000000003 38 Q6.84 26.599999999999998 15.959999999999999 24.32 L24.32 24.32 Q30.400000000000002 27.36 32.68 38 Z" fill="#cf1c2c"/><path d="M16.34 23.94 L23.56 23.94 L20.900000000000002 30.400000000000002 Z" fill="#e2a995"/></g><circle cx="31" cy="31" r="7" fill="#11dc8c"/></svg>
<div class="t " style="left:759.60px;top:856.19px;font-size:17.5px;line-height:17.5px;color:#283050;letter-spacing:0.1px;-webkit-text-stroke:0.1px #283050;">Easy Admin</div>
<div class="t " style="left:991.60px;top:857.44px;font-size:17.2px;line-height:17.2px;color:#283050;letter-spacing:0px;">-</div>
<div class="t " style="left:1110.80px;top:857.44px;font-size:17.2px;line-height:17.2px;color:#283050;letter-spacing:0px;">-</div>
<div class="t " style="left:1219.90px;top:857.44px;font-size:17.2px;line-height:17.2px;color:#283050;letter-spacing:0px;">-</div>
<div class="t " style="left:1326.40px;top:857.44px;font-size:17.2px;line-height:17.2px;color:#283050;letter-spacing:0px;">1.00 h</div>
<div class="t " style="left:1437.00px;top:857.44px;font-size:17.2px;line-height:17.2px;color:#283050;letter-spacing:0px;">-</div>
<div class="t " style="left:1542.00px;top:857.44px;font-size:17.2px;line-height:17.2px;color:#283050;letter-spacing:0px;">1.00 h</div>
<div class="r" style="left:92px;top:894.5px;width:1525px;height:1.5px;background:#eceef2;"></div>
<div class="t " style="left:312.40px;top:915.59px;font-size:17.5px;line-height:17.5px;color:#283050;letter-spacing:0.1px;-webkit-text-stroke:0.1px #283050;">I want a new Mac PC for my home office</div>
<svg class="r" style="left:711.5px;top:904.6px;" width="38" height="38" viewBox="0 0 38 38"><defs><clipPath id="c730_923"><circle cx="19" cy="19" r="19"/></clipPath></defs><g clip-path="url(#c730_923)"><rect width="38" height="38" fill="#abc9ee"/><ellipse cx="19.0" cy="10.260000000000002" rx="6.84" ry="6.08" fill="#43352f"/><ellipse cx="19.76" cy="16.34" rx="5.89" ry="8.17" fill="#d6a390"/><path d="M14.82 15.200000000000001 H25.080000000000002" stroke="#8a625a" stroke-width="1.33" opacity="0.6"/><path d="M3.8000000000000003 38 Q6.84 26.599999999999998 15.959999999999999 24.32 L24.32 24.32 Q30.400000000000002 27.36 32.68 38 Z" fill="#cf1c2c"/><path d="M16.34 23.94 L23.56 23.94 L20.900000000000002 30.400000000000002 Z" fill="#e2a995"/></g><circle cx="31" cy="31" r="7" fill="#11dc8c"/></svg>
<div class="t " style="left:759.60px;top:914.79px;font-size:17.5px;line-height:17.5px;color:#283050;letter-spacing:0.1px;-webkit-text-stroke:0.1px #283050;">Easy Admin</div>
<div class="t " style="left:991.60px;top:916.04px;font-size:17.2px;line-height:17.2px;color:#283050;letter-spacing:0px;">-</div>
<div class="t " style="left:1110.80px;top:916.04px;font-size:17.2px;line-height:17.2px;color:#283050;letter-spacing:0px;">-</div>
<div class="t " style="left:1219.90px;top:916.04px;font-size:17.2px;line-height:17.2px;color:#283050;letter-spacing:0px;">-</div>
<div class="t " style="left:1326.40px;top:916.04px;font-size:17.2px;line-height:17.2px;color:#283050;letter-spacing:0px;">0.50 h</div>
<div class="t " style="left:1437.00px;top:916.04px;font-size:17.2px;line-height:17.2px;color:#283050;letter-spacing:0px;">-</div>
<div class="t " style="left:1542.00px;top:916.04px;font-size:17.2px;line-height:17.2px;color:#283050;letter-spacing:0px;">0.50 h</div>
<div class="r" style="left:92px;top:953px;width:1525px;height:1.5px;background:#eceef2;"></div>
<div class="t " style="left:312.40px;top:974.19px;font-size:17.5px;line-height:17.5px;color:#283050;letter-spacing:0.1px;-webkit-text-stroke:0.1px #283050;">My PC has just shut down. Please help!</div>
<svg class="r" style="left:711.5px;top:963.2px;" width="38" height="38" viewBox="0 0 38 38"><defs><clipPath id="c730_982"><circle cx="19" cy="19" r="19"/></clipPath></defs><g clip-path="url(#c730_982)"><rect width="38" height="38" fill="#abc9ee"/><ellipse cx="19.0" cy="10.260000000000002" rx="6.84" ry="6.08" fill="#43352f"/><ellipse cx="19.76" cy="16.34" rx="5.89" ry="8.17" fill="#d6a390"/><path d="M14.82 15.200000000000001 H25.080000000000002" stroke="#8a625a" stroke-width="1.33" opacity="0.6"/><path d="M3.8000000000000003 38 Q6.84 26.599999999999998 15.959999999999999 24.32 L24.32 24.32 Q30.400000000000002 27.36 32.68 38 Z" fill="#cf1c2c"/><path d="M16.34 23.94 L23.56 23.94 L20.900000000000002 30.400000000000002 Z" fill="#e2a995"/></g><circle cx="31" cy="31" r="7" fill="#11dc8c"/></svg>
<div class="t " style="left:759.60px;top:973.39px;font-size:17.5px;line-height:17.5px;color:#283050;letter-spacing:0.1px;-webkit-text-stroke:0.1px #283050;">Easy Admin</div>
<div class="t " style="left:991.60px;top:974.64px;font-size:17.2px;line-height:17.2px;color:#283050;letter-spacing:0px;">-</div>
<div class="t " style="left:1110.80px;top:974.64px;font-size:17.2px;line-height:17.2px;color:#283050;letter-spacing:0px;">-</div>
<div class="t " style="left:1219.90px;top:974.64px;font-size:17.2px;line-height:17.2px;color:#283050;letter-spacing:0px;">4.00 h</div>
<div class="t " style="left:1326.40px;top:974.64px;font-size:17.2px;line-height:17.2px;color:#283050;letter-spacing:0px;">-</div>
<div class="t " style="left:1437.00px;top:974.64px;font-size:17.2px;line-height:17.2px;color:#283050;letter-spacing:0px;">-</div>
<div class="t " style="left:1542.00px;top:974.64px;font-size:17.2px;line-height:17.2px;color:#283050;letter-spacing:0px;">4.00 h</div>
<div class="r" style="left:92px;top:1011.8px;width:1525px;height:1.5px;background:#eceef2;"></div>
<div class="t " style="left:312.40px;top:1032.69px;font-size:17.5px;line-height:17.5px;color:#283050;letter-spacing:0.1px;-webkit-text-stroke:0.1px #283050;">Online payment not working</div>
<svg class="r" style="left:711.5px;top:1021.7px;" width="38" height="38" viewBox="0 0 38 38"><defs><clipPath id="c730_1040"><circle cx="19" cy="19" r="19"/></clipPath></defs><g clip-path="url(#c730_1040)"><rect width="38" height="38" fill="#abc9ee"/><ellipse cx="19.0" cy="10.260000000000002" rx="6.84" ry="6.08" fill="#43352f"/><ellipse cx="19.76" cy="16.34" rx="5.89" ry="8.17" fill="#d6a390"/><path d="M14.82 15.200000000000001 H25.080000000000002" stroke="#8a625a" stroke-width="1.33" opacity="0.6"/><path d="M3.8000000000000003 38 Q6.84 26.599999999999998 15.959999999999999 24.32 L24.32 24.32 Q30.400000000000002 27.36 32.68 38 Z" fill="#cf1c2c"/><path d="M16.34 23.94 L23.56 23.94 L20.900000000000002 30.400000000000002 Z" fill="#e2a995"/></g><circle cx="31" cy="31" r="7" fill="#11dc8c"/></svg>
<div class="t " style="left:759.60px;top:1031.89px;font-size:17.5px;line-height:17.5px;color:#283050;letter-spacing:0.1px;-webkit-text-stroke:0.1px #283050;">Easy Admin</div>
<div class="t " style="left:991.60px;top:1033.14px;font-size:17.2px;line-height:17.2px;color:#283050;letter-spacing:0px;">-</div>
<div class="t " style="left:1110.80px;top:1033.14px;font-size:17.2px;line-height:17.2px;color:#283050;letter-spacing:0px;">-</div>
<div class="t " style="left:1219.90px;top:1033.14px;font-size:17.2px;line-height:17.2px;color:#283050;letter-spacing:0px;">-</div>
<div class="t " style="left:1326.40px;top:1033.14px;font-size:17.2px;line-height:17.2px;color:#283050;letter-spacing:0px;">-</div>
<div class="t " style="left:1437.00px;top:1033.14px;font-size:17.2px;line-height:17.2px;color:#283050;letter-spacing:0px;">1.00 h</div>
<div class="t " style="left:1542.00px;top:1033.14px;font-size:17.2px;line-height:17.2px;color:#283050;letter-spacing:0px;">1.00 h</div>
<div class="r" style="left:92px;top:1070px;width:1525px;height:1.5px;background:#eceef2;"></div>
<div class="t " style="left:1683.75px;top:141.11px;font-size:17px;line-height:17px;color:#3d4256;letter-spacing:0.45px;-webkit-text-stroke:0.2px #3d4256;">All mailboxes</div>
<div class="t " style="left:1683.75px;top:184.36px;font-size:17px;line-height:17px;color:#3d4256;letter-spacing:0.45px;-webkit-text-stroke:0.2px #3d4256;">All e-mail templates</div>
<div class="t " style="left:1683.75px;top:226.86px;font-size:17px;line-height:17px;color:#3d4256;letter-spacing:0.45px;-webkit-text-stroke:0.2px #3d4256;">All Help desk projects</div>
<div class="t " style="left:1683.75px;top:268.61px;font-size:17px;line-height:17px;color:#3d4256;letter-spacing:0.45px;-webkit-text-stroke:0.2px #3d4256;">Help desk settings</div>
<div class="t " style="left:1683.75px;top:311.86px;font-size:17px;line-height:17px;color:#3d4256;letter-spacing:0.45px;-webkit-text-stroke:0.2px #3d4256;">SLA reports</div>
<div class="t " style="left:1683.75px;top:353.61px;font-size:17px;line-height:17px;color:#3d4256;letter-spacing:0.45px;-webkit-text-stroke:0.2px #3d4256;">Recalculate tickets</div>
<div class="t " style="left:1683.75px;top:396.86px;font-size:17px;line-height:17px;color:#3d4256;letter-spacing:0.45px;-webkit-text-stroke:0.2px #3d4256;">Reports</div>
<div class="t " style="left:1683.75px;top:439.36px;font-size:17px;line-height:17px;color:#3d4256;letter-spacing:0.45px;-webkit-text-stroke:0.2px #3d4256;">Help desk users</div>
<svg class="r" style="left:1651px;top:140px;" width="20" height="20" viewBox="0 0 20 20"><path d="M2 1 V19 M6.5 3.5 L16.5 9 L6.5 14.5 Z" fill="none" stroke="#4d5262" stroke-width="1.3" stroke-linejoin="round"/></svg>
<svg class="r" style="left:1651px;top:183px;" width="20" height="18" viewBox="0 0 20 18"><rect x="1" y="1.5" width="18" height="15" rx="1.5" fill="none" stroke="#4d5262" stroke-width="1.3"/><path d="M1.5 3 L10 9.5 L18.5 3 M3.5 13 L6.5 10.5 M16.5 13 L13.5 10.5" fill="none" stroke="#4d5262" stroke-width="1.25"/></svg>
<svg class="r" style="left:1651px;top:226px;" width="20" height="19" viewBox="0 0 20 19"><path d="M1.5 0.5 V17.5 M1.5 6.5 H5 M1.5 17 H5" fill="none" stroke="#4d5262" stroke-width="1.3"/><rect x="6.5" y="4" width="12" height="5" rx="1" fill="none" stroke="#4d5262" stroke-width="1.3"/><rect x="6.5" y="12.5" width="12" height="5" rx="1" fill="none" stroke="#4d5262" stroke-width="1.3"/></svg>
<svg class="r" style="left:1651px;top:268px;" width="20" height="20" viewBox="0 0 20 20"><path d="M1 4 H2.5 M8.5 4 H19 M1 15.5 H10.5 M16.5 15.5 H19" stroke="#4d5262" stroke-width="1.3"/><circle cx="5.5" cy="4" r="2.6" fill="none" stroke="#4d5262" stroke-width="1.3"/><circle cx="13.5" cy="15.5" r="2.6" fill="none" stroke="#4d5262" stroke-width="1.3"/></svg>
<svg class="r" style="left:1650px;top:310.75px;" width="20" height="20" viewBox="0 0 20 20"><circle cx="10" cy="10" r="9" fill="none" stroke="#4d5262" stroke-width="1.3"/><circle cx="10" cy="10" r="5.5" fill="none" stroke="#4d5262" stroke-width="1.3"/><circle cx="10" cy="10" r="2" fill="none" stroke="#4d5262" stroke-width="1.25"/></svg>
<svg class="r" style="left:1650px;top:396.25px;" width="20" height="20" viewBox="0 0 20 20"><circle cx="10" cy="10" r="9" fill="none" stroke="#4d5262" stroke-width="1.3"/><circle cx="10" cy="10" r="5.5" fill="none" stroke="#4d5262" stroke-width="1.3"/><circle cx="10" cy="10" r="2" fill="none" stroke="#4d5262" stroke-width="1.25"/></svg>
<svg class="r" style="left:1651px;top:353px;" width="20" height="21" viewBox="0 0 20 21"><path d="M2 1.5 V19.5 L17.5 10.5 Z" fill="none" stroke="#4d5262" stroke-width="1.3" stroke-linejoin="round"/></svg>
<svg class="r" style="left:1651px;top:438px;" width="20" height="21" viewBox="0 0 20 21"><circle cx="9.5" cy="5" r="4" fill="none" stroke="#4d5262" stroke-width="1.3"/><path d="M1.5 19.5 C1.5 13.5 5 11.5 9.5 11.5 C14 11.5 17.5 13.5 17.5 19.5 Z" fill="none" stroke="#4d5262" stroke-width="1.3" stroke-linejoin="round"/></svg>
<div class="r" style="left:1633px;top:1012.5px;width:287px;height:1px;background:#e8ebf1;"></div>
<div class="r" style="left:1857px;top:1013px;width:1px;height:67px;background:#e8ebf1;"></div>
<svg class="r" style="left:1873px;top:1036px;" width="28" height="22" viewBox="0 0 28 22"><path d="M1 2 H15 M1 10.5 H25 M1 19.5 H15 M19.5 5 L25 10.5 L19.5 16" fill="none" stroke="#4a4f5c" stroke-width="1.5"/></svg>
</body></html>
